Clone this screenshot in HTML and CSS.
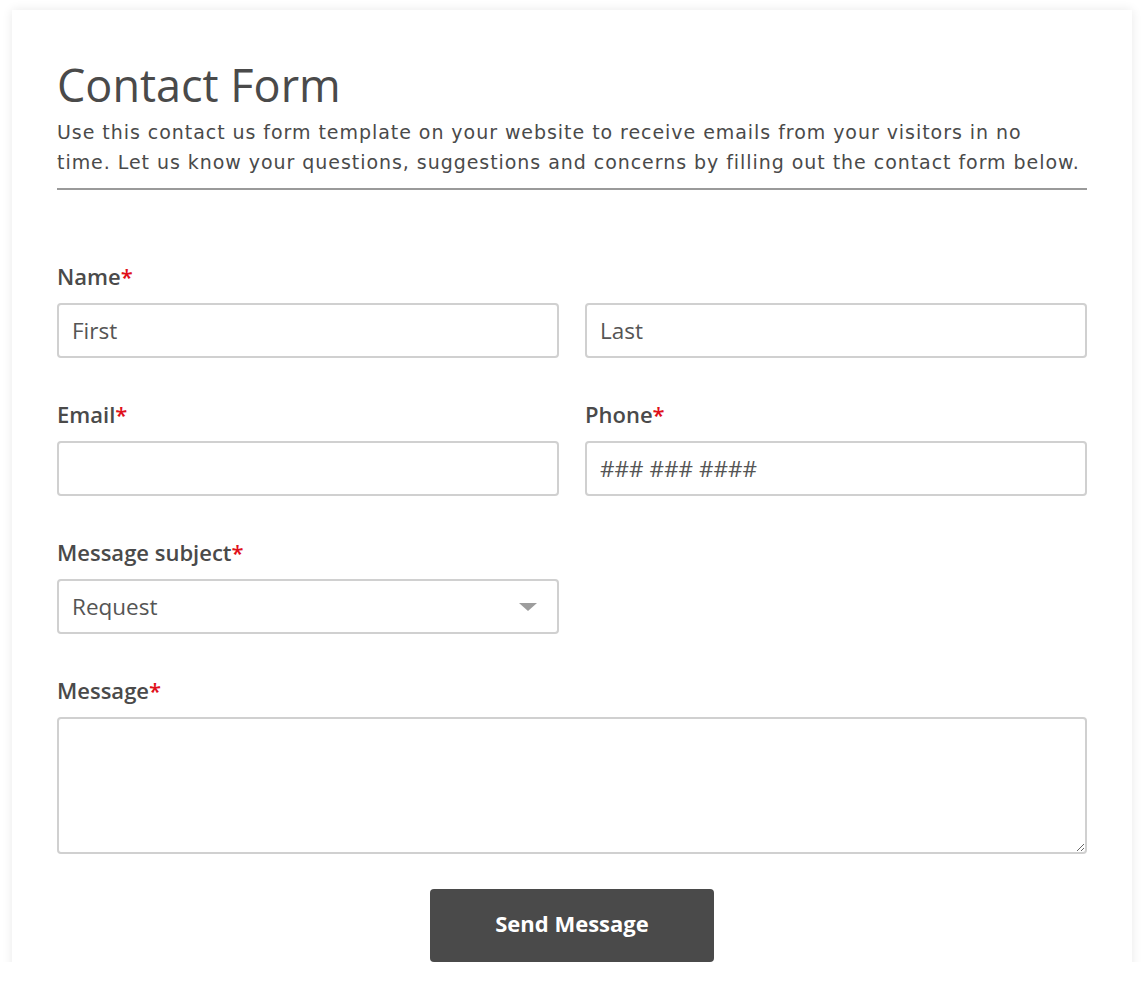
FILE: index.html
```html
<!DOCTYPE html>
<html lang="en">
<head>
<meta charset="utf-8">
<title>Contact Form</title>
<link rel="stylesheet" href="styles.css">
</head>
<body>
<div class="page">
  <form class="card">
    <h1 class="title">Contact Form</h1>
    <p class="intro">Use this contact us form template on your website to receive emails from your visitors in no<br>time. Let us know your questions, suggestions and concerns by filling out the contact form below.</p>
    <hr class="divider">

    <div class="field">
      <label class="label">Name<span class="req">*</span></label>
      <div class="grid2">
        <input class="input" type="text" placeholder="First">
        <input class="input" type="text" placeholder="Last">
      </div>
    </div>

    <div class="grid2 field">
      <div>
        <label class="label">Email<span class="req">*</span></label>
        <input class="input" type="email">
      </div>
      <div>
        <label class="label">Phone<span class="req">*</span></label>
        <input class="input" type="tel" placeholder="### ### ####">
      </div>
    </div>

    <div class="grid2 field">
      <div>
        <label class="label">Message subject<span class="req">*</span></label>
        <div class="select-wrap">
          <select class="input select">
            <option>Request</option>
            <option>Question</option>
            <option>Feedback</option>
          </select>
        </div>
      </div>
    </div>

    <div class="field">
      <label class="label">Message<span class="req">*</span></label>
      <textarea class="input textarea"></textarea>
    </div>

    <div class="actions">
      <button type="button" class="btn">Send Message</button>
    </div>
  </form>
</div>
</body>
</html>
```

FILE: styles.css
```css
html, body {
  margin: 0;
  padding: 0;
  background: #ffffff;
}

.page {
  height: 962px;
  overflow: hidden;
  padding: 10px 10px 0 12px;
  box-sizing: border-box;
}

.card {
  background: #ffffff;
  box-shadow: 0 0 10px rgba(0, 0, 0, 0.09);
  padding: 49px 45px 60px 45px;
  color: #4a4a4a;
}

.title {
  margin: 0;
  font-family: "Open Sans", "Liberation Sans", sans-serif;
  font-weight: 400;
  font-size: 45px;
  line-height: 52px;
  color: #4a4a4a;
}

.intro {
  margin: 6px 0 0 0;
  font-family: "DejaVu Sans", Verdana, sans-serif;
  font-size: 19px;
  letter-spacing: 0.95px;
  line-height: 30px;
  white-space: nowrap;
  color: #4a4a4a;
}

.divider {
  margin: 11px 0 0 0;
  border: 0;
  border-top: 2px solid #9a9a9a;
  height: 0;
}

.field {
  margin-top: 72px;
}

.field + .field {
  margin-top: 42px;
}

.grid2 {
  display: grid;
  grid-template-columns: 1fr 1fr;
  column-gap: 26px;
}

.label {
  display: block;
  font-family: "Open Sans", "Liberation Sans", sans-serif;
  font-weight: 600;
  font-size: 22px;
  line-height: 28px;
  color: #4a4a4a;
  margin-bottom: 13px;
}

.req {
  color: #e0101a;
}

.input {
  display: block;
  width: 100%;
  box-sizing: border-box;
  height: 55px;
  margin: 0;
  padding: 0 13px;
  border: 2px solid #d0d0d0;
  border-radius: 4px;
  background: #ffffff;
  font-family: "Open Sans", "Liberation Sans", sans-serif;
  font-size: 22.5px;
  color: #555555;
  outline: none;
}

.input::placeholder {
  color: #555555;
  opacity: 1;
}

.select-wrap {
  position: relative;
}

.select {
  appearance: none;
  -webkit-appearance: none;
}

.select-wrap::after {
  content: "";
  position: absolute;
  right: 22px;
  top: 24px;
  width: 0;
  height: 0;
  border-left: 9px solid transparent;
  border-right: 9px solid transparent;
  border-top: 8px solid #9d9d9d;
  pointer-events: none;
}

.textarea {
  height: 137px;
  padding: 12px 13px;
  resize: vertical;
}

.actions {
  display: flex;
  justify-content: center;
  margin-top: 35px;
}

.btn {
  width: 284px;
  height: 73px;
  border: 0;
  border-radius: 4px;
  background: #4a4a4a;
  color: #ffffff;
  font-family: "Open Sans", "Liberation Sans", sans-serif;
  font-weight: 700;
  font-size: 22px;
  padding: 0 0 5px 0;
  cursor: pointer;
}
```
